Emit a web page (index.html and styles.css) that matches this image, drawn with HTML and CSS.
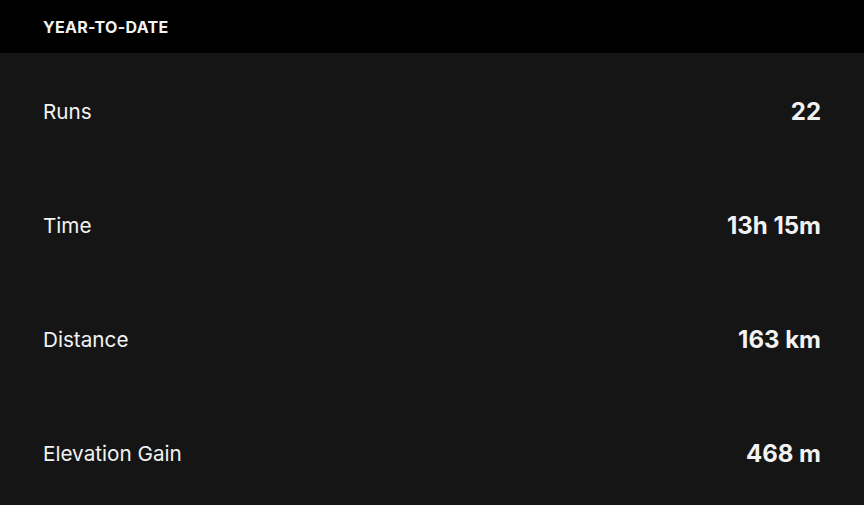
FILE: index.html
```html
<!DOCTYPE html>
<html lang="en">

<head>
    <meta charset="UTF-8">
    <meta name="viewport" content="width=device-width, initial-scale=1.0">
    <title>Year-to-date</title>
    <link rel="stylesheet" href="styles.css">
</head>

<body>
    <div class="panel">
        <div class="panel-header">
            <h2>YEAR-TO-DATE</h2>
        </div>
        <ul class="stats">
            <li class="stat">
                <span class="label">Runs</span>
                <span class="value">22</span>
            </li>
            <li class="stat">
                <span class="label">Time</span>
                <span class="value">13h 15m</span>
            </li>
            <li class="stat">
                <span class="label">Distance</span>
                <span class="value">163 km</span>
            </li>
            <li class="stat">
                <span class="label">Elevation Gain</span>
                <span class="value">468 m</span>
            </li>
        </ul>
    </div>
</body>

</html>
```

FILE: styles.css
```css
body {
    font-family: Inter, "Noto Sans", sans-serif;
    background-color: #151515;
    color: #f2f2f2;
    margin: 0;
}

.panel {
    width: 100%;
}

.panel-header {
    background-color: #000000;
    height: 53px;
    display: flex;
    align-items: center;
    padding: 0 43px;
}

.panel-header h2 {
    margin: 0;
    font-size: 16px;
    font-weight: 700;
    letter-spacing: 0.3px;
}

.stats {
    list-style: none;
    margin: 0;
    padding: 1px 43px 0;
}

.stat {
    height: 114px;
    display: flex;
    justify-content: space-between;
    align-items: center;
}

.label {
    font-size: 20.7px;
}

.value {
    font-size: 24px;
    font-weight: 700;
}
```
